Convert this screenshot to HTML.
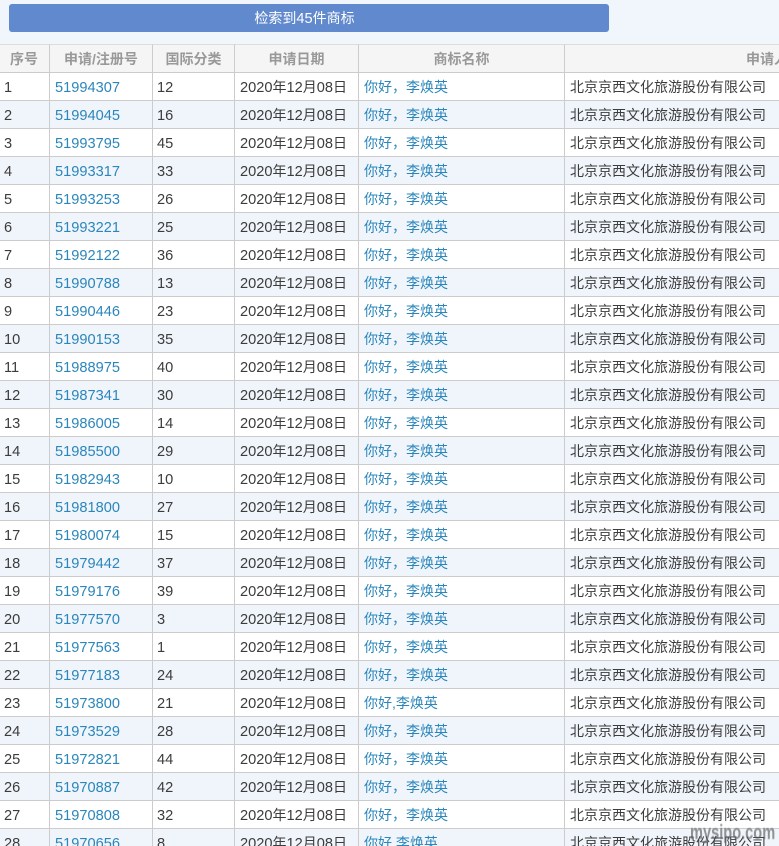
<!DOCTYPE html>
<html lang="zh-CN"><head><meta charset="utf-8"><title>检索到45件商标</title>
<style>
html,body{margin:0;padding:0;width:779px;height:846px;overflow:hidden;background:#f1f6fc}
body{position:relative;font-family:"Liberation Sans","Noto Sans CJK SC",sans-serif;font-size:14px;color:#3c3c3c}
i{font-style:normal;font-size:14.6px;line-height:1}
.btn{position:absolute;left:9px;top:4px;width:600px;height:28px;line-height:28px;background:#6189cd;border-radius:3px;color:#fff;text-align:center;box-sizing:border-box;padding-right:9px}
table{position:absolute;left:0;top:44px;width:1000px;table-layout:fixed;border-collapse:separate;border-spacing:0;filter:blur(.25px)}
th,td{height:27px;padding:0 0 0 5px;border-right:1px solid #ccc;border-bottom:1px solid #ccc;box-sizing:content-box;white-space:nowrap;overflow:hidden;line-height:20px;text-align:left;font-weight:normal;vertical-align:middle}
th{background:#f5f5f5;color:#999;font-weight:bold;text-align:center;border-top:1px solid #ddd;padding:0}
th:first-child{padding-right:1px}
th:last-child{text-align:left;padding-left:181px}
td:first-child{padding-left:4px}
td:nth-child(3){padding-left:4px}
tbody tr{background:#fff}
tbody tr:nth-child(even){background:#f0f5fb}
td a{color:#2b86bb;text-decoration:none}
.wm{position:absolute;left:690px;top:822px;font:bold 20px "Liberation Sans",sans-serif;color:rgba(90,90,90,.65);transform:scaleX(.73);transform-origin:left top;filter:blur(.5px)}
</style></head><body>
<div class="btn">检索到<i>45</i>件商标</div>
<table>
<colgroup><col style="width:50px"><col style="width:103px"><col style="width:82px"><col style="width:124px"><col style="width:206px"><col></colgroup>
<thead><tr><th>序号</th><th>申请/注册号</th><th>国际分类</th><th>申请日期</th><th>商标名称</th><th>申请人名称</th></tr></thead>
<tbody>
<tr><td><i>1</i></td><td><a><i>51994307</i></a></td><td><i>12</i></td><td><i>2020</i>年<i>12</i>月<i>08</i>日</td><td><a>你好，李焕英</a></td><td>北京京西文化旅游股份有限公司</td></tr>
<tr><td><i>2</i></td><td><a><i>51994045</i></a></td><td><i>16</i></td><td><i>2020</i>年<i>12</i>月<i>08</i>日</td><td><a>你好，李焕英</a></td><td>北京京西文化旅游股份有限公司</td></tr>
<tr><td><i>3</i></td><td><a><i>51993795</i></a></td><td><i>45</i></td><td><i>2020</i>年<i>12</i>月<i>08</i>日</td><td><a>你好，李焕英</a></td><td>北京京西文化旅游股份有限公司</td></tr>
<tr><td><i>4</i></td><td><a><i>51993317</i></a></td><td><i>33</i></td><td><i>2020</i>年<i>12</i>月<i>08</i>日</td><td><a>你好，李焕英</a></td><td>北京京西文化旅游股份有限公司</td></tr>
<tr><td><i>5</i></td><td><a><i>51993253</i></a></td><td><i>26</i></td><td><i>2020</i>年<i>12</i>月<i>08</i>日</td><td><a>你好，李焕英</a></td><td>北京京西文化旅游股份有限公司</td></tr>
<tr><td><i>6</i></td><td><a><i>51993221</i></a></td><td><i>25</i></td><td><i>2020</i>年<i>12</i>月<i>08</i>日</td><td><a>你好，李焕英</a></td><td>北京京西文化旅游股份有限公司</td></tr>
<tr><td><i>7</i></td><td><a><i>51992122</i></a></td><td><i>36</i></td><td><i>2020</i>年<i>12</i>月<i>08</i>日</td><td><a>你好，李焕英</a></td><td>北京京西文化旅游股份有限公司</td></tr>
<tr><td><i>8</i></td><td><a><i>51990788</i></a></td><td><i>13</i></td><td><i>2020</i>年<i>12</i>月<i>08</i>日</td><td><a>你好，李焕英</a></td><td>北京京西文化旅游股份有限公司</td></tr>
<tr><td><i>9</i></td><td><a><i>51990446</i></a></td><td><i>23</i></td><td><i>2020</i>年<i>12</i>月<i>08</i>日</td><td><a>你好，李焕英</a></td><td>北京京西文化旅游股份有限公司</td></tr>
<tr><td><i>10</i></td><td><a><i>51990153</i></a></td><td><i>35</i></td><td><i>2020</i>年<i>12</i>月<i>08</i>日</td><td><a>你好，李焕英</a></td><td>北京京西文化旅游股份有限公司</td></tr>
<tr><td><i>11</i></td><td><a><i>51988975</i></a></td><td><i>40</i></td><td><i>2020</i>年<i>12</i>月<i>08</i>日</td><td><a>你好，李焕英</a></td><td>北京京西文化旅游股份有限公司</td></tr>
<tr><td><i>12</i></td><td><a><i>51987341</i></a></td><td><i>30</i></td><td><i>2020</i>年<i>12</i>月<i>08</i>日</td><td><a>你好，李焕英</a></td><td>北京京西文化旅游股份有限公司</td></tr>
<tr><td><i>13</i></td><td><a><i>51986005</i></a></td><td><i>14</i></td><td><i>2020</i>年<i>12</i>月<i>08</i>日</td><td><a>你好，李焕英</a></td><td>北京京西文化旅游股份有限公司</td></tr>
<tr><td><i>14</i></td><td><a><i>51985500</i></a></td><td><i>29</i></td><td><i>2020</i>年<i>12</i>月<i>08</i>日</td><td><a>你好，李焕英</a></td><td>北京京西文化旅游股份有限公司</td></tr>
<tr><td><i>15</i></td><td><a><i>51982943</i></a></td><td><i>10</i></td><td><i>2020</i>年<i>12</i>月<i>08</i>日</td><td><a>你好，李焕英</a></td><td>北京京西文化旅游股份有限公司</td></tr>
<tr><td><i>16</i></td><td><a><i>51981800</i></a></td><td><i>27</i></td><td><i>2020</i>年<i>12</i>月<i>08</i>日</td><td><a>你好，李焕英</a></td><td>北京京西文化旅游股份有限公司</td></tr>
<tr><td><i>17</i></td><td><a><i>51980074</i></a></td><td><i>15</i></td><td><i>2020</i>年<i>12</i>月<i>08</i>日</td><td><a>你好，李焕英</a></td><td>北京京西文化旅游股份有限公司</td></tr>
<tr><td><i>18</i></td><td><a><i>51979442</i></a></td><td><i>37</i></td><td><i>2020</i>年<i>12</i>月<i>08</i>日</td><td><a>你好，李焕英</a></td><td>北京京西文化旅游股份有限公司</td></tr>
<tr><td><i>19</i></td><td><a><i>51979176</i></a></td><td><i>39</i></td><td><i>2020</i>年<i>12</i>月<i>08</i>日</td><td><a>你好，李焕英</a></td><td>北京京西文化旅游股份有限公司</td></tr>
<tr><td><i>20</i></td><td><a><i>51977570</i></a></td><td><i>3</i></td><td><i>2020</i>年<i>12</i>月<i>08</i>日</td><td><a>你好，李焕英</a></td><td>北京京西文化旅游股份有限公司</td></tr>
<tr><td><i>21</i></td><td><a><i>51977563</i></a></td><td><i>1</i></td><td><i>2020</i>年<i>12</i>月<i>08</i>日</td><td><a>你好，李焕英</a></td><td>北京京西文化旅游股份有限公司</td></tr>
<tr><td><i>22</i></td><td><a><i>51977183</i></a></td><td><i>24</i></td><td><i>2020</i>年<i>12</i>月<i>08</i>日</td><td><a>你好，李焕英</a></td><td>北京京西文化旅游股份有限公司</td></tr>
<tr><td><i>23</i></td><td><a><i>51973800</i></a></td><td><i>21</i></td><td><i>2020</i>年<i>12</i>月<i>08</i>日</td><td><a>你好,李焕英</a></td><td>北京京西文化旅游股份有限公司</td></tr>
<tr><td><i>24</i></td><td><a><i>51973529</i></a></td><td><i>28</i></td><td><i>2020</i>年<i>12</i>月<i>08</i>日</td><td><a>你好，李焕英</a></td><td>北京京西文化旅游股份有限公司</td></tr>
<tr><td><i>25</i></td><td><a><i>51972821</i></a></td><td><i>44</i></td><td><i>2020</i>年<i>12</i>月<i>08</i>日</td><td><a>你好，李焕英</a></td><td>北京京西文化旅游股份有限公司</td></tr>
<tr><td><i>26</i></td><td><a><i>51970887</i></a></td><td><i>42</i></td><td><i>2020</i>年<i>12</i>月<i>08</i>日</td><td><a>你好，李焕英</a></td><td>北京京西文化旅游股份有限公司</td></tr>
<tr><td><i>27</i></td><td><a><i>51970808</i></a></td><td><i>32</i></td><td><i>2020</i>年<i>12</i>月<i>08</i>日</td><td><a>你好，李焕英</a></td><td>北京京西文化旅游股份有限公司</td></tr>
<tr><td><i>28</i></td><td><a><i>51970656</i></a></td><td><i>8</i></td><td><i>2020</i>年<i>12</i>月<i>08</i>日</td><td><a>你好,李焕英</a></td><td>北京京西文化旅游股份有限公司</td></tr>
</tbody></table>
<div class="wm">mysipo.com</div>
</body></html>
